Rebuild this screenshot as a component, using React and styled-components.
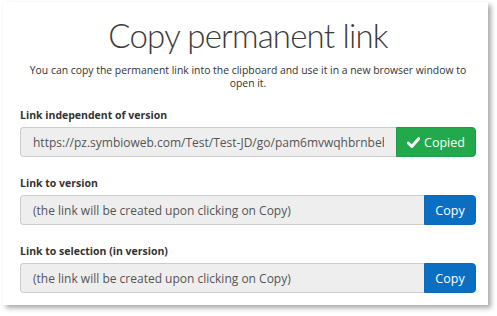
import React, { useState } from 'react';
import styled, { createGlobalStyle } from 'styled-components';

const GlobalStyle = createGlobalStyle`
  html, body {
    margin: 0;
    background: #ffffff;
  }
  body {
    font-family: "Open Sans", "Noto Sans", sans-serif;
    color: #333;
  }
`;

const links = [
  {
    id: 'independent',
    label: 'Link independent of version',
    value: 'https://pz.symbioweb.com/Test/Test-JD/go/pam6mvwqhbrnbebc',
  },
  {
    id: 'version',
    label: 'Link to version',
    value: '(the link will be created upon clicking on Copy)',
  },
  {
    id: 'selection',
    label: 'Link to selection (in version)',
    value: '(the link will be created upon clicking on Copy)',
  },
];

function App() {
  const [copied, setCopied] = useState({ independent: true });

  return (
    <Page>
      <GlobalStyle />
      <Card>
        <Title>Copy permanent link</Title>
        <Intro>
          You can copy the permanent link into the clipboard and use it in a new browser window to
          open it.
        </Intro>
        {links.map((link) => (
          <Field key={link.id}>
            <Label>{link.label}</Label>
            <InputGroup>
              <LinkInput readOnly value={link.value} />
              <CopyButton
                $copied={copied[link.id]}
                onClick={() => setCopied({ ...copied, [link.id]: true })}
              >
                {copied[link.id] ? (
                  <>
                    <svg width="13" height="11" viewBox="0 0 13 11">
                      <path d="M1.2 6 L4.8 9.4 L11.8 1.6" fill="none" stroke="#fff" strokeWidth="3" strokeLinejoin="round" strokeLinecap="round" />
                    </svg>
                    Copied
                  </>
                ) : (
                  'Copy'
                )}
              </CopyButton>
            </InputGroup>
          </Field>
        ))}
      </Card>
    </Page>
  );
}

const Page = styled.div`
  padding: 2px 9px 11px 3px;
  width: 497px;
  height: 316px;
  box-sizing: border-box;
`;

const Card = styled.div`
  background: #fff;
  box-shadow: 3px 3px 5px rgba(0, 0, 0, 0.35);
  padding: 0 12px 12px 17px;
  height: 100%;
  box-sizing: border-box;
`;

const Title = styled.h1`
  margin: 0;
  padding-top: 10px;
  text-align: center;
  font-family: Lato, "Open Sans", sans-serif;
  font-weight: 300;
  font-size: 33px;
  letter-spacing: -0.8px;
  line-height: 47px;
  color: #3a3a3a;
`;

const Intro = styled.p`
  margin: 5px 0 0;
  text-align: center;
  font-size: 10.4px;
  line-height: 13px;
  color: #333;
`;

const Field = styled.div`
  margin-top: 20px;

  &:first-of-type {
    margin-top: 19px;
  }
`;

const Label = styled.div`
  font-size: 10.5px;
  font-weight: 700;
  line-height: 13px;
  color: #333;
  margin-bottom: 5px;
`;

const InputGroup = styled.div`
  display: flex;
  height: 30px;
  width: 456px;
`;

const LinkInput = styled.input`
  flex: 1;
  min-width: 0;
  box-sizing: border-box;
  height: 30px;
  padding: 0 12px;
  border: 1px solid #ccc;
  border-right: none;
  border-radius: 4px 0 0 4px;
  background: #eee;
  font-family: "Open Sans", sans-serif;
  font-size: 12px;
  color: #555;
  outline: none;
`;

const CopyButton = styled.button`
  display: flex;
  align-items: center;
  justify-content: center;
  gap: 4px;
  box-sizing: border-box;
  height: 30px;
  padding: 0 10px;
  border: 1px solid ${(p) => (p.$copied ? '#1e9a45' : '#0a68b4')};
  border-radius: 0 4px 4px 0;
  background: ${(p) => (p.$copied ? '#22a94c' : '#0a6fc2')};
  color: #fff;
  font-family: "Open Sans", sans-serif;
  font-size: 12.5px;
  cursor: pointer;
  width: ${(p) => (p.$copied ? '80px' : '52px')};
`;

export default App;
